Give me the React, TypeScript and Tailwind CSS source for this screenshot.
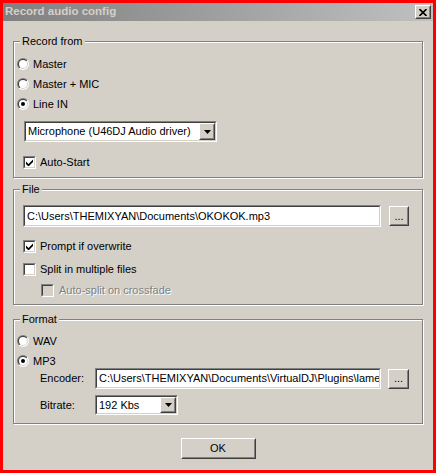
import React from "react";

function Sunken({ className = "", inner = "bg-white", children }: { className?: string; inner?: string; children?: React.ReactNode }) {
  return (
    <div className={`border border-t-[#808080] border-l-[#808080] border-b-white border-r-white ${className}`}>
      <div className={`flex h-full w-full items-center overflow-hidden border border-t-[#404040] border-l-[#404040] border-b-[#d4d0c8] border-r-[#d4d0c8] ${inner}`}>
        {children}
      </div>
    </div>
  );
}

function Raised({ className = "", children }: { className?: string; children?: React.ReactNode }) {
  return (
    <div className={`shrink-0 border border-t-white border-l-white border-b-[#404040] border-r-[#404040] bg-[#d4d0c8] ${className}`}>
      <div className="flex h-full w-full items-center justify-center border border-t-[#d4d0c8] border-l-[#d4d0c8] border-b-[#808080] border-r-[#808080]">
        {children}
      </div>
    </div>
  );
}

function Radio({ checked }: { checked?: boolean }) {
  return (
    <svg width="12" height="12" viewBox="0 0 12 12" className="shrink-0">
      <defs>
        <linearGradient id="rOuter" x1="0" y1="0" x2="1" y2="1">
          <stop offset="0.5" stopColor="#808080" />
          <stop offset="0.5" stopColor="#ffffff" />
        </linearGradient>
        <linearGradient id="rInner" x1="0" y1="0" x2="1" y2="1">
          <stop offset="0.5" stopColor="#404040" />
          <stop offset="0.5" stopColor="#d4d0c8" />
        </linearGradient>
      </defs>
      <circle cx="6" cy="6" r="6" fill="url(#rOuter)" />
      <circle cx="6" cy="6" r="5" fill="url(#rInner)" />
      <circle cx="6" cy="6" r="4" fill="#ffffff" />
      {checked && <circle cx="6" cy="6" r="2" fill="#000000" />}
    </svg>
  );
}

function Check({ checked, disabled }: { checked?: boolean; disabled?: boolean }) {
  return (
    <Sunken className="h-[13px] w-[13px] shrink-0" inner={`justify-center ${disabled ? "bg-[#d4d0c8]" : "bg-white"}`}>
      {checked && (
        <svg width="7" height="7" viewBox="0 0 7 7">
          <polygon points="0,2.5 2.5,5 7,0.5 7,3 2.5,7.5 0,5" fill="#000000" />
        </svg>
      )}
    </Sunken>
  );
}

function Arrow() {
  return (
    <svg width="7" height="4" viewBox="0 0 7 4">
      <polygon points="0,0 7,0 3.5,4" fill="#000000" />
    </svg>
  );
}

function Select({ value, className = "" }: { value: string; className?: string }) {
  return (
    <Sunken className={className}>
      <span className="min-w-0 flex-1 overflow-hidden whitespace-nowrap pl-[2px]">{value}</span>
      <Raised className="h-full w-[16px]">
        <Arrow />
      </Raised>
    </Sunken>
  );
}

function Group({ title, className = "", children }: { title: string; className?: string; children?: React.ReactNode }) {
  return (
    <fieldset className={`border border-[#808080] shadow-[1px_1px_0_white,inset_1px_1px_0_white] ${className}`}>
      <legend className="ml-[6px] bg-[#d4d0c8] px-[2px] leading-[14px]">{title}</legend>
      {children}
    </fieldset>
  );
}

export default function App() {
  return (
    <div className="h-[473px] w-[436px] border-[3px] border-[#ff0000] bg-[#d4d0c8] font-['Liberation_Sans',Arial,sans-serif] text-[11px] text-black">
      <div className="flex h-[18px] items-center justify-between bg-linear-to-r from-[#808080] to-[#c0c0c0] px-[2px]">
        <span className="text-[11.5px] font-bold text-[#d4d0c8]">Record audio config</span>
        <Raised className="h-[14px] w-[16px]">
          <svg width="8" height="7" viewBox="0 0 8 7">
            <path d="M0.5 0 L7.5 7 M7.5 0 L0.5 7" stroke="#000000" strokeWidth="1.6" />
          </svg>
        </Raised>
      </div>

      <div className="px-[10px] pt-[13px]">
        <Group title="Record from" className="pb-[5px]">
          <div className="mt-[6px] flex h-[20px] items-center pl-[3px]">
            <Radio />
            <span className="ml-[4px]">Master</span>
          </div>
          <div className="flex h-[20px] items-center pl-[3px]">
            <Radio />
            <span className="ml-[4px]">Master + MIC</span>
          </div>
          <div className="flex h-[20px] items-center pl-[3px]">
            <Radio checked />
            <span className="ml-[4px]">Line IN</span>
          </div>
          <Select value="Microphone (U46DJ Audio driver)" className="ml-[10px] mt-[7px] h-[21px] w-[193px]" />
          <div className="mt-[10px] flex h-[20px] items-center pl-[9px]">
            <Check checked />
            <span className="ml-[4px]">Auto-Start</span>
          </div>
        </Group>

        <Group title="File" className="mt-[4px] pb-[4px]">
          <div className="mt-[9px] flex h-[22px] items-center pl-[9px]">
            <Sunken className="h-[22px] w-[358px]">
              <span className="pl-[2px]">{"C:\\Users\\THEMIXYAN\\Documents\\OKOKOK.mp3"}</span>
            </Sunken>
            <Raised className="ml-[8px] h-[20px] w-[20px]">
              <span className="leading-none">...</span>
            </Raised>
          </div>
          <div className="mt-[9px] flex h-[20px] items-center pl-[9px]">
            <Check checked />
            <span className="ml-[4px]">Prompt if overwrite</span>
          </div>
          <div className="mt-[3px] flex h-[20px] items-center pl-[9px]">
            <Check />
            <span className="ml-[4px]">Split in multiple files</span>
          </div>
          <div className="mt-[1px] flex h-[20px] items-center pl-[27px]">
            <Check disabled />
            <span className="ml-[5px] text-[#808080] [text-shadow:1px_1px_0_white]">Auto-split on crossfade</span>
          </div>
        </Group>

        <Group title="Format" className="mt-[7px] pb-[8px]">
          <div className="mt-[8px] flex h-[14px] items-center pl-[3px]">
            <Radio />
            <span className="ml-[4px]">WAV</span>
          </div>
          <div className="mt-[6px] flex h-[14px] items-center pl-[3px]">
            <Radio checked />
            <span className="ml-[4px]">MP3</span>
          </div>
          <div className="flex h-[21px] items-center pl-[26px]">
            <span className="w-[55px]">Encoder:</span>
            <Sunken className="h-[21px] w-[286px]">
              <span className="min-w-0 overflow-hidden whitespace-nowrap pl-[2px]">
                {"C:\\Users\\THEMIXYAN\\Documents\\VirtualDJ\\Plugins\\lame_e"}
              </span>
            </Sunken>
            <Raised className="ml-[7px] h-[20px] w-[21px]">
              <span className="leading-none">...</span>
            </Raised>
          </div>
          <div className="mt-[6px] flex h-[20px] items-center pl-[26px]">
            <span className="w-[55px]">Bitrate:</span>
            <Select value="192 Kbs" className="h-[20px] w-[83px]" />
          </div>
        </Group>

        <div className="mt-[14px] flex justify-center">
          <Raised className="h-[21px] w-[75px]">
            <span>OK</span>
          </Raised>
        </div>
      </div>
    </div>
  );
}
